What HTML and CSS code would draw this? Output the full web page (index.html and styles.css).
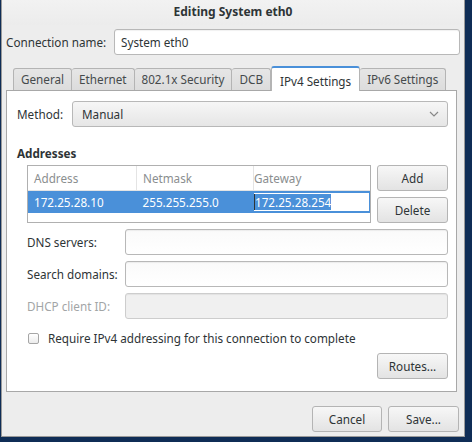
FILE: index.html
```html
<!DOCTYPE html>
<html>
<head>
<meta charset="utf-8">
<link rel="stylesheet" href="styles.css">
</head>
<body>
<div class="dialog">
  <div class="titlebar">Editing System eth0</div>
  <div class="conn-row">
    <span class="conn-label">Connection name:</span>
    <div class="entry conn-entry">System eth0</div>
  </div>
  <div class="notebook">
    <div class="tabs">
      <div class="tab">General</div>
      <div class="tab">Ethernet</div>
      <div class="tab">802.1x Security</div>
      <div class="tab">DCB</div>
      <div class="tab active">IPv4 Settings</div>
      <div class="tab">IPv6 Settings</div>
    </div>
    <div class="page">
      <div class="method-row">
        <span class="method-label">Method:</span>
        <div class="combo">
          <span>Manual</span>
          <svg class="chev" width="10" height="6" viewBox="0 0 10 6"><path d="M1 1 L5 5 L9 1" fill="none" stroke="#888" stroke-width="1.2"/></svg>
        </div>
      </div>
      <div class="section-title">Addresses</div>
      <div class="addr-row">
        <div class="addr-table">
          <div class="thead">
            <div class="col c1">Address</div>
            <div class="col c2">Netmask</div>
            <div class="col c3">Gateway</div>
          </div>
          <div class="trow">
            <div class="col c1">172.25.28.10</div>
            <div class="col c2">255.255.255.0</div>
            <div class="col c3"><div class="cell-edit"><span class="sel">172.25.28.254</span></div></div>
          </div>
        </div>
        <div class="addr-buttons">
          <div class="btn">Add</div>
          <div class="btn">Delete</div>
        </div>
      </div>
      <div class="form">
        <span class="flabel">DNS servers:</span><div class="entry fentry"></div>
        <span class="flabel">Search domains:</span><div class="entry fentry"></div>
        <span class="flabel disabled">DHCP client ID:</span><div class="entry fentry dis"></div>
      </div>
      <div class="check-row">
        <span class="checkbox"></span>
        <span>Require IPv4 addressing for this connection to complete</span>
      </div>
      <div class="routes-row">
        <div class="btn">Routes...</div>
      </div>
    </div>
  </div>
  <div class="bottom">
    <div class="btn bbtn">Cancel</div>
    <div class="btn bbtn">Save...</div>
  </div>
</div>
</body>
</html>
```
FILE: styles.css
```css
html, body {
  margin: 0;
  padding: 0;
}
body {
  background: #0f2d56;
  width: 472px;
  height: 442px;
  overflow: hidden;
  font-family: "Noto Sans", "DejaVu Sans", sans-serif;
  font-size: 11.7px;
  color: #2e3436;
}
.dialog {
  margin-left: 1px;
  width: 462px;
  height: 436px;
  background: #ededed;
  border: 1px solid #9a9a9a;
  border-top: none;
  display: flex;
  flex-direction: column;
}
.titlebar {
  height: 25px;
  line-height: 24px;
  text-align: center;
  font-weight: bold;
  font-size: 12px;
  background: linear-gradient(#f2f2f2, #ececec);
}
.conn-row {
  display: flex;
  align-items: center;
  height: 26px;
  margin-top: 4px;
  padding-left: 4px;
}
.conn-label {
  width: 108px;
}
.entry {
  box-sizing: border-box;
  height: 26px;
  border: 1px solid #b8b8b8;
  border-radius: 3px;
  background: #ffffff;
  padding-left: 6px;
  line-height: 24px;
  box-shadow: inset 0 1px 1px rgba(0,0,0,0.06);
}
.conn-entry {
  width: 346px;
}
.notebook {
  margin-left: 4px;
  margin-top: 10px;
  width: 451px;
}
.tabs {
  display: flex;
  align-items: flex-end;
  padding-left: 7px;
  height: 25px;
}
.tab {
  box-sizing: border-box;
  height: 22px;
  line-height: 21px;
  padding: 0 7px;
  border: 1px solid #b4b4b4;
  border-bottom: none;
  border-left: none;
  background: linear-gradient(#e6e6e6, #dcdcdc);
  color: #454a4c;
  border-radius: 3px 3px 0 0;
}
.tab:first-child {
  border-left: 1px solid #b4b4b4;
}
.tab.active {
  height: 25px;
  line-height: 26px;
  background: #ffffff;
  color: #2e3436;
  border: 1px solid #b4b4b4;
  border-top: 2px solid #4a90d9;
  border-bottom: none;
  margin-bottom: -1px;
  position: relative;
  z-index: 1;
  padding: 0 8px;
}
.page {
  box-sizing: border-box;
  height: 302px;
  background: #ffffff;
  border: 1px solid #a8a8a8;
  padding: 10px 8px 0 10px;
}
.method-row {
  display: flex;
  align-items: center;
}
.method-label {
  width: 55px;
}
.combo {
  box-sizing: border-box;
  width: 376px;
  height: 26px;
  border: 1px solid #b8b8b8;
  border-radius: 3px;
  background: linear-gradient(#f6f6f6, #e6e6e6);
  display: flex;
  align-items: center;
  justify-content: space-between;
  padding: 0 8px 0 9px;
}
.section-title {
  font-weight: bold;
  margin-top: 18px;
  height: 16px;
}
.addr-row {
  display: flex;
  margin-top: 4px;
  padding-left: 10px;
}
.addr-table {
  box-sizing: border-box;
  width: 344px;
  height: 58px;
  border: 1px solid #b0b0b0;
  background: #ffffff;
}
.thead, .trow {
  display: flex;
}
.thead {
  height: 24px;
  line-height: 24px;
  color: #8a8e8f;
  border-bottom: 1px solid #e4e4e4;
}
.thead .col {
  border-right: 1px solid #e4e4e4;
}
.thead .col.c3 {
  border-right: none;
}
.col {
  box-sizing: border-box;
  padding-left: 6px;
}
.c1 { width: 109px; }
.c2 { width: 117px; }
.c3 { flex: 1; padding-left: 0; }
.trow {
  height: 22px;
  line-height: 22px;
  background: #4a90d9;
  color: #ffffff;
}
.cell-edit {
  box-sizing: border-box;
  margin-top: 1px;
  height: 20px;
  width: 117px;
  background: #ffffff;
  border: 1px solid #4a90d9;
  line-height: 18px;
  padding-left: 0;
}
.sel {
  background: #4a90d9;
  color: #ffffff;
  border-left: 1px solid #2e3436;
}
.addr-buttons {
  display: flex;
  flex-direction: column;
  gap: 6px;
  margin-left: 6px;
}
.btn {
  box-sizing: border-box;
  width: 71px;
  height: 26px;
  border: 1px solid #b4b4b4;
  border-radius: 3px;
  background: linear-gradient(#f7f7f7, #e3e3e3);
  text-align: center;
  line-height: 24px;
  color: #2e3436;
}
.form {
  display: grid;
  grid-template-columns: 98px 323px;
  row-gap: 6px;
  margin-top: 6px;
  padding-left: 10px;
  align-items: center;
}
.fentry {
  width: 323px;
  background: linear-gradient(#fafafa, #ffffff);
}
.fentry.dis {
  background: #f0f0f0;
  border-color: #cdcdcd;
}
.flabel.disabled {
  color: #a2a5a6;
}
.check-row {
  display: flex;
  align-items: center;
  margin-top: 12px;
  padding-left: 11px;
  height: 14px;
}
.checkbox {
  box-sizing: border-box;
  width: 11px;
  height: 11px;
  border: 1px solid #a6a6a6;
  border-radius: 2px;
  background: linear-gradient(#ffffff, #ececec);
  margin-right: 9px;
}
.routes-row {
  display: flex;
  justify-content: flex-end;
  margin-top: 8px;
}
.bottom {
  display: flex;
  justify-content: flex-end;
  gap: 6px;
  margin-top: 14px;
  padding-right: 5px;
}
.bbtn {
  height: 26px;
}
.bottom .bbtn:first-child {
  width: 70px;
}
```
